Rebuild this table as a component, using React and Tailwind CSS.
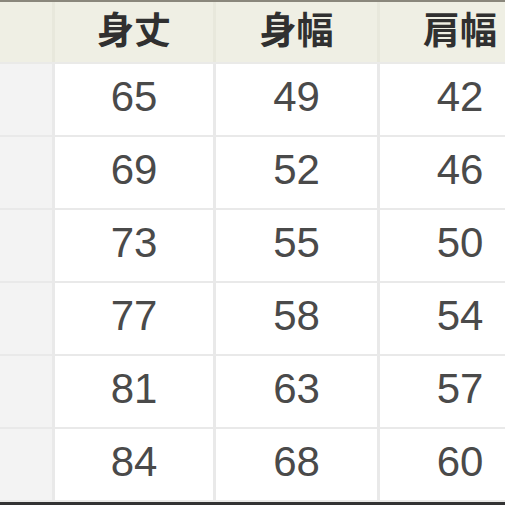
import React from 'react';

const headers = ['', '身丈', '身幅', '肩幅'];

const rows = [
  ['65', '49', '42'],
  ['69', '52', '46'],
  ['73', '55', '50'],
  ['77', '58', '54'],
  ['81', '63', '57'],
  ['84', '68', '60'],
];

const App = () => {
  return (
    <div className="w-[505px] h-[505px] overflow-hidden bg-white flex flex-col">
      <div className="h-[2px] bg-[#8a877c]" />
      <div className="flex-1 overflow-hidden flex flex-col bg-[#eaeae8]">
        {/* header row */}
        <div className="w-[540px] h-[60px] grid grid-cols-[52px_158px_161px_160px] gap-x-[3px] bg-[#e8e8dc]">
          {headers.map((h, i) => (
            <div
              key={i}
              className="bg-[#efefe4] flex justify-center pt-[2px] text-[37px] font-bold text-[#303030] leading-[1.3]"
              style={{ fontFamily: '"Noto Sans CJK JP", "Noto Sans", sans-serif' }}
            >
              {h}
            </div>
          ))}
        </div>
        {/* body */}
        <div className="w-[540px] mt-[2px] grid grid-cols-[52px_158px_161px_160px] grid-rows-[repeat(6,71px)] gap-x-[3px] gap-y-[2px] bg-[#e9e9e9]">
          {rows.map((r, i) => (
            <React.Fragment key={i}>
              <div className="bg-[#f3f3f3]" />
              {r.map((v, j) => (
                <div
                  key={j}
                  className="bg-white flex items-center justify-center pb-[4px] text-[42px] text-[#4a4a4a] leading-tight"
                  style={{ fontFamily: '"Liberation Sans", Arial, sans-serif' }}
                >
                  {v}
                </div>
              ))}
            </React.Fragment>
          ))}
        </div>
      </div>
      <div className="h-[3px] bg-[#333333]" />
    </div>
  );
};

export default App;
